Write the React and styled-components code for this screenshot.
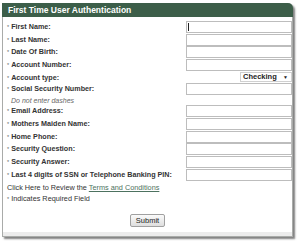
import React from "react";
import styled, { createGlobalStyle } from "styled-components";

const fields = [
  { label: "First Name:", caret: true },
  { label: "Last Name:" },
  { label: "Date Of Birth:" },
  { label: "Account Number:" },
  { label: "Account type:", select: "Checking" },
  { label: "Social Security Number:" },
  { note: "Do not enter dashes" },
  { label: "Email Address:", wide: true },
  { label: "Mothers Maiden Name:", wide: true },
  { label: "Home Phone:", wide: true },
  { label: "Security Question:", wide: true },
  { label: "Security Answer:", wide: true },
  { label: "Last 4 digits of SSN or Telephone Banking PIN:", wide: true },
];

const GlobalStyle = createGlobalStyle`
  body {
    margin: 0;
    background: #fff;
    font-family: "Liberation Sans", Arial, sans-serif;
  }
`;

const Page = styled.div`
  width: 300px;
  height: 242px;
  padding: 3px 0 0 2px;
  box-sizing: border-box;
`;

const Panel = styled.div`
  width: 291px;
  box-sizing: border-box;
  border: 1px solid #a9aba9;
  border-top: 0;
  border-top-right-radius: 5px;
  background: #fff;
  box-shadow: 2px 2px 2px rgba(0, 0, 0, 0.5);
`;

const Header = styled.div`
  height: 14px;
  margin: 0 -1px;
  padding-left: 6px;
  background: #3c5e49;
  border-top-right-radius: 5px;
  color: #fff;
  font-size: 8.5px;
  font-weight: bold;
  line-height: 14px;
`;

const Body = styled.div`
  padding: 4px 0 0 4px;
`;

const Grid = styled.div`
  display: grid;
  grid-template-columns: 1fr 106px;
`;

const Row = styled.div`
  display: contents;
`;

const Label = styled.div`
  height: ${({ $h }) => $h}px;
  padding-top: 1px;
  box-sizing: border-box;
  color: #333;
  font-size: 7.2px;
  font-weight: bold;
  line-height: 9px;
  white-space: nowrap;
`;

const Star = styled.span`
  color: #666;
  font-size: 5.5px;
  font-weight: normal;
  margin-right: 2px;
`;

const Note = styled.div`
  grid-column: 1 / -1;
  height: 9.3px;
  padding-left: 4px;
  color: #666;
  font-size: 7px;
  font-style: italic;
  line-height: 9px;
`;

const Cell = styled.div`
  position: relative;
  display: flex;
  justify-content: flex-end;
  align-items: flex-start;
`;

const Input = styled.input`
  width: 106px;
  height: 12px;
  margin: 0;
  padding: 0 2px;
  box-sizing: border-box;
  border: 1px solid #bdbdbd;
  background: #fff;
  outline: none;
`;

const Caret = styled.span`
  position: absolute;
  left: 2px;
  top: 2px;
  width: 1px;
  height: 8px;
  background: #222;
`;

const SelectBox = styled.div`
  display: flex;
  justify-content: space-between;
  align-items: center;
  width: 52px;
  height: 10px;
  padding: 0 3px 0 2px;
  box-sizing: border-box;
  border: 1px solid #d0d0d0;
  background: #fff;
  color: #222;
  font-size: 7.5px;
  font-weight: bold;
  line-height: 8px;
`;

const Arrow = styled.span`
  font-size: 5px;
  font-weight: normal;
  line-height: 6px;
`;

const Line = styled.div`
  height: 11px;
  color: #333;
  font-size: 7.3px;
  line-height: 11px;
  white-space: nowrap;
`;

const TermsLink = styled.a`
  color: #4d7260;
  text-decoration: underline;
`;

const Actions = styled.div`
  display: flex;
  justify-content: center;
  padding: 10px 0 5px;
`;

const Button = styled.button`
  width: 35px;
  height: 13px;
  padding: 0;
  border: 1px solid #a0a0a0;
  border-radius: 2px;
  background: linear-gradient(#fafafa, #dedede);
  color: #222;
  font-family: "Liberation Sans", Arial, sans-serif;
  font-size: 7.5px;
  line-height: 11px;
`;

const Footer = styled.div`
  height: 4px;
  background: #ececec;
`;

export default function App() {
  return (
    <>
      <GlobalStyle />
      <Page>
        <Panel>
          <Header>First Time User Authentication</Header>
          <Body>
            <Grid>
              {fields.map((f, i) => {
                if (f.note) return <Note key={i}>{f.note}</Note>;
                const h = f.select ? 11.2 : f.wide ? 12.8 : 12.7;
                return (
                  <Row key={i}>
                    <Label $h={h}>
                      <Star>*</Star>
                      {f.label}
                    </Label>
                    <Cell>
                      {f.select ? (
                        <SelectBox role="combobox">
                          {f.select}
                          <Arrow>▼</Arrow>
                        </SelectBox>
                      ) : (
                        <Input type="text" />
                      )}
                      {f.caret && <Caret />}
                    </Cell>
                  </Row>
                );
              })}
            </Grid>
            <Line>
              Click Here to Review the <TermsLink href="#">Terms and Conditions</TermsLink>
            </Line>
            <Line>
              <Star>*</Star>Indicates Required Field
            </Line>
          </Body>
          <Actions>
            <Button type="button">Submit</Button>
          </Actions>
          <Footer />
        </Panel>
      </Page>
    </>
  );
}
